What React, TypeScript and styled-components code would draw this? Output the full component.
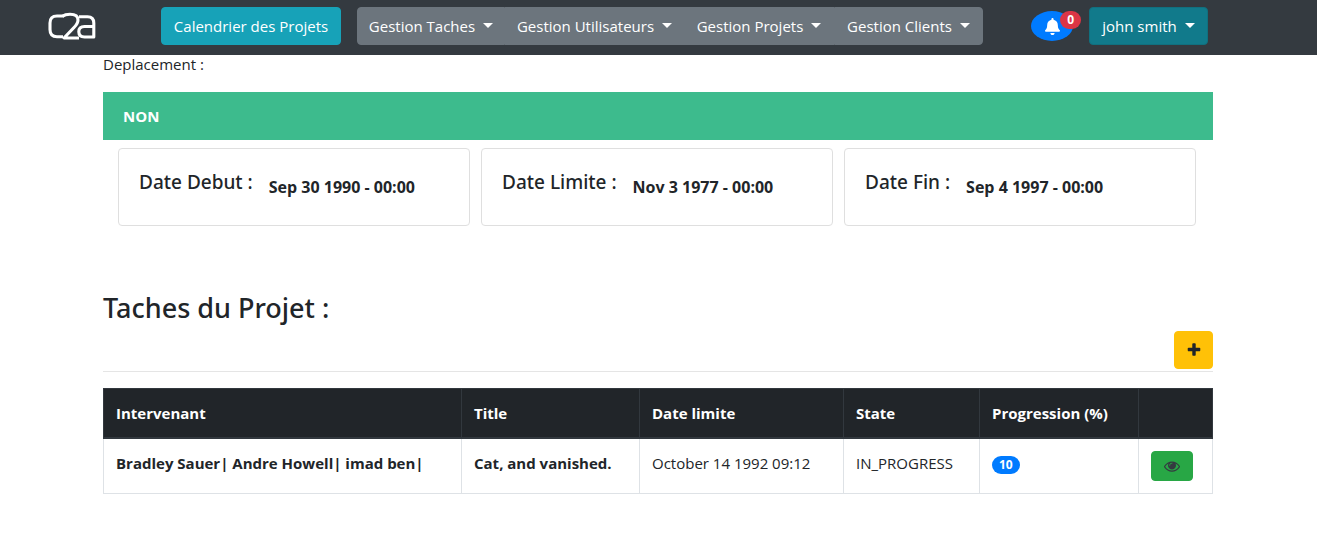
import React from "react";
import styled, { createGlobalStyle } from "styled-components";
import { FaBell } from "react-icons/fa";

const GlobalStyle = createGlobalStyle`
  *, *::before, *::after { box-sizing: border-box; }
  body {
    margin: 0;
    background: #fff;
    color: #212529;
    font-family: "Open Sans", "Noto Sans", sans-serif;
    font-size: 15px;
    line-height: 24px;
  }
  h2, h5, p { margin: 0; }
  button { font-family: inherit; cursor: pointer; }
`;

const Navbar = styled.nav`
  display: flex;
  align-items: center;
  height: 55px;
  padding: 0 109px 3px 48px;
  background: #343a40;
`;

const Brand = styled.a`
  display: flex;
  width: 48px;
  margin-right: 65px;
`;

const Button = styled.button<{ $bg: string; $width: number }>`
  display: inline-flex;
  align-items: center;
  justify-content: center;
  gap: 8px;
  width: ${(p) => p.$width}px;
  height: 38px;
  padding: 0;
  border: 1px solid ${(p) => p.$bg};
  border-radius: 4px;
  background: ${(p) => p.$bg};
  color: #fff;
  font-size: 15px;
  line-height: 24px;
  white-space: nowrap;
`;

const UserButton = styled(Button)`
  border-color: #10707f;
`;

const Caret = styled.span`
  border-top: 5px solid currentColor;
  border-left: 5px solid transparent;
  border-right: 5px solid transparent;
  margin-bottom: 2px;
`;

const ButtonGroup = styled.div`
  display: flex;
  margin-left: 16px;

  & > button:not(:first-child) {
    border-top-left-radius: 0;
    border-bottom-left-radius: 0;
  }
  & > button:not(:last-child) {
    border-top-right-radius: 0;
    border-bottom-right-radius: 0;
  }
`;

const UserArea = styled.div`
  display: flex;
  align-items: center;
  gap: 16px;
  margin-left: auto;
`;

const BellButton = styled.button`
  position: relative;
  display: flex;
  align-items: center;
  justify-content: center;
  width: 42px;
  height: 30px;
  padding: 0;
  border: 0;
  border-radius: 50%;
  background: #007bff;
  color: #fff;
`;

const Badge = styled.span<{ $bg: string }>`
  display: inline-block;
  padding: 0 7px;
  border-radius: 10px;
  background: ${(p) => p.$bg};
  color: #fff;
  font-size: 12px;
  font-weight: 700;
  line-height: 18px;
`;

const BellBadge = styled(Badge)`
  position: absolute;
  top: 0;
  right: -8px;
`;

const Container = styled.main`
  max-width: 1111px;
  margin: 0 auto;
  padding-right: 1px;
`;

const FieldLabel = styled.p`
  line-height: 18px;
  margin-bottom: 19px;
`;

const Banner = styled.div`
  padding: 12px 20px;
  background: #3dbb8d;
  color: #fff;
  font-weight: 700;
`;

const DateGrid = styled.div`
  display: grid;
  grid-template-columns: repeat(3, 1fr);
  gap: 11px;
  padding: 8px 17px 0 15px;
`;

const DateCard = styled.section`
  display: flex;
  gap: 16px;
  height: 78px;
  padding: 21px 20px;
  border: 1px solid #dfdfdf;
  border-radius: 4px;
`;

const DateTitle = styled.h5`
  font-family: "Noto Sans", "Open Sans", sans-serif;
  font-size: 19px;
  font-weight: 500;
  line-height: 24px;
`;

const DateValue = styled.p`
  padding-top: 5px;
  font-weight: 700;
  font-size: 16px;
`;

const SectionHeader = styled.header`
  display: flex;
  flex-direction: column;
  margin: 65px 0 16px;
  padding-bottom: 2px;
  border-bottom: 1px solid #e5e5e5;
`;

const SectionTitle = styled.h2`
  font-family: "Noto Sans", "Open Sans", sans-serif;
  font-size: 27px;
  font-weight: 500;
  line-height: 34px;
  margin-bottom: 6px;
`;

const AddButton = styled(Button)`
  align-self: flex-end;
  color: #212529;
`;

const Table = styled.table`
  width: 100%;
  table-layout: fixed;
  border-collapse: collapse;
  border: 1px solid #dee2e6;
`;

const Column = styled.col<{ $width?: number }>`
  width: ${(p) => (p.$width ? `${p.$width}px` : "auto")};
`;

const HeadCell = styled.th`
  padding: 12px;
  border: 1px solid #32383e;
  border-bottom-width: 2px;
  background: #212529;
  color: #fff;
  font-weight: 700;
  text-align: left;
`;

const Cell = styled.td<{ $bold?: boolean }>`
  padding: 12px;
  height: 55px;
  border: 1px solid #dee2e6;
  font-weight: ${(p) => (p.$bold ? 700 : 400)};
  vertical-align: top;
  white-space: nowrap;
`;

const ViewButton = styled(Button)`
  display: flex;
  height: 30px;
  color: #343a40;
`;

const Logo = () => (
  <svg width="48" height="28" viewBox="0 0 48 28" fill="none" stroke="#fff" strokeWidth="3.1" strokeLinejoin="round">
    <path d="M16 4H9Q2 4 2 11V17.500Q2 24.700 9 24.700H15" />
    <path d="M14.500 4.200Q17 2.300 22 2.300Q30 2.300 30 8Q30 11.500 26 15.500L16 26H31" />
    <path d="M31 4.700H39.500Q45.800 4.700 45.800 11V25H36.500Q30.800 25 30.800 19.800Q30.800 14.500 36.500 14.500H45.500" />
  </svg>
);

const PlusIcon = () => (
  <svg width="16" height="16" viewBox="0 0 1792 1792" fill="currentColor">
    <path d="M1600 736v192q0 40-28 68t-68 28h-416v416q0 40-28 68t-68 28h-192q-40 0-68-28t-28-68v-416h-416q-40 0-68-28t-28-68v-192q0-40 28-68t68-28h416v-416q0-40 28-68t68-28h192q40 0 68 28t28 68v416h416q40 0 68 28t28 68z" />
  </svg>
);

const EyeIcon = () => (
  <svg width="16" height="16" viewBox="0 0 1792 1792" fill="currentColor">
    <path d="M1664 960q-152-236-381-353 61 104 61 225 0 185-131.5 316.5t-316.5 131.5-316.5-131.5-131.5-316.5q0-121 61-225-229 117-381 353 133 205 333.5 326.5t434.5 121.5 434.5-121.5 333.5-326.5zm-720-384q0-20-14-34t-34-14q-125 0-214.5 89.5t-89.5 214.5q0 20 14 34t34 14 34-14 14-34q0-86 61-147t147-61q20 0 34-14t14-34zm848 384q0 34-20 69-140 230-376.5 368.5t-499.5 138.5-499.5-139-376.5-368q-20-35-20-69t20-69q140-229 376.5-368t499.5-139 499.5 139 376.5 368q20 35 20 69z" />
  </svg>
);

const menus = [
  { label: "Gestion Taches", width: 148 },
  { label: "Gestion Utilisateurs", width: 179 },
  { label: "Gestion Projets", width: 150 },
  { label: "Gestion Clients", width: 149 },
];

const dates = [
  { label: "Date Debut :", value: "Sep 30 1990 - 00:00" },
  { label: "Date Limite :", value: "Nov 3 1977 - 00:00" },
  { label: "Date Fin :", value: "Sep 4 1997 - 00:00" },
];

export default function App() {
  return (
    <>
      <GlobalStyle />
      <Navbar>
        <Brand href="#" aria-label="c2a">
          <Logo />
        </Brand>
        <Button $bg="#17a2b8" $width={180}>Calendrier des Projets</Button>
        <ButtonGroup>
          {menus.map((m) => (
            <Button key={m.label} $bg="#6c757d" $width={m.width}>
              {m.label}
              <Caret />
            </Button>
          ))}
        </ButtonGroup>
        <UserArea>
          <BellButton aria-label="Notifications">
            <FaBell size={17} />
            <BellBadge $bg="#dc3545">0</BellBadge>
          </BellButton>
          <UserButton $bg="#117a8b" $width={119}>
            john smith
            <Caret />
          </UserButton>
        </UserArea>
      </Navbar>
      <Container>
        <FieldLabel>Deplacement :</FieldLabel>
        <Banner>NON</Banner>
        <DateGrid>
          {dates.map((d) => (
            <DateCard key={d.label}>
              <DateTitle>{d.label}</DateTitle>
              <DateValue>{d.value}</DateValue>
            </DateCard>
          ))}
        </DateGrid>
        <SectionHeader>
          <SectionTitle>Taches du Projet :</SectionTitle>
          <AddButton $bg="#ffc107" $width={39} aria-label="Ajouter">
            <PlusIcon />
          </AddButton>
        </SectionHeader>
        <Table>
          <colgroup>
            <Column />
            <Column $width={178} />
            <Column $width={204} />
            <Column $width={136} />
            <Column $width={159} />
            <Column $width={74} />
          </colgroup>
          <thead>
            <tr>
              <HeadCell>Intervenant</HeadCell>
              <HeadCell>Title</HeadCell>
              <HeadCell>Date limite</HeadCell>
              <HeadCell>State</HeadCell>
              <HeadCell>Progression (%)</HeadCell>
              <HeadCell />
            </tr>
          </thead>
          <tbody>
            <tr>
              <Cell $bold>Bradley Sauer| Andre Howell| imad ben|</Cell>
              <Cell $bold>Cat, and vanished.</Cell>
              <Cell>October 14 1992 09:12</Cell>
              <Cell>IN_PROGRESS</Cell>
              <Cell>
                <Badge $bg="#007bff">10</Badge>
              </Cell>
              <Cell>
                <ViewButton $bg="#28a745" $width={42} aria-label="Voir">
                  <EyeIcon />
                </ViewButton>
              </Cell>
            </tr>
          </tbody>
        </Table>
      </Container>
    </>
  );
}
